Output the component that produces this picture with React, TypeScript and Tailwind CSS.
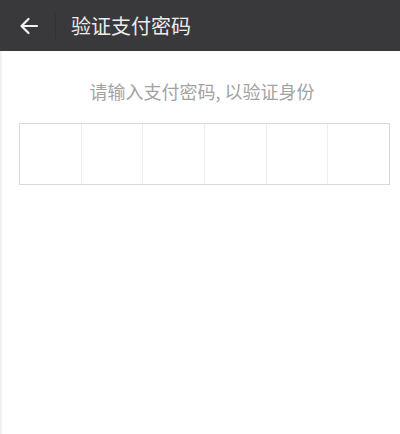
import React from "react";

export default function App() {
  const cells = [0, 1, 2, 3, 4, 5];
  return (
    <div
      className="w-[400px] h-[434px] bg-white flex flex-col"
      style={{ fontFamily: '"Noto Sans CJK SC", "Noto Sans", sans-serif' }}
    >
      <div className="h-[51px] bg-[#39393c] flex items-center shrink-0">
        <div className="w-[55px] h-full flex items-center justify-center">
          <svg width="20" height="18" viewBox="0 0 20 18" fill="none" className="ml-[2px]">
            <path d="M18 9H3M9.5 2L2.5 9L9.5 16" stroke="#f2f2f2" strokeWidth="2.2" strokeLinecap="round" strokeLinejoin="round" />
          </svg>
        </div>
        <div className="w-px h-[26px] bg-[#333335]" />
        <div className="pl-[15px] text-[20px] leading-none text-[#ececec]">验证支付密码</div>
      </div>
      <div className="flex-1 border-l-2 border-[#f2f2f2] flex flex-col items-center">
        <div className="mt-[28px] text-[18px] leading-[24px] text-[#a3a3a3] ml-[2px]">
          请输入支付密码, 以验证身份
        </div>
        <div className="mt-[20px] self-start ml-[17px] w-[371px] h-[62px] border border-[#d9d9d9] flex">
          {cells.map((i) => (
            <div
              key={i}
              className={"flex-1 h-full " + (i < 5 ? "border-r border-[#ededed]" : "")}
            />
          ))}
        </div>
      </div>
    </div>
  );
}
